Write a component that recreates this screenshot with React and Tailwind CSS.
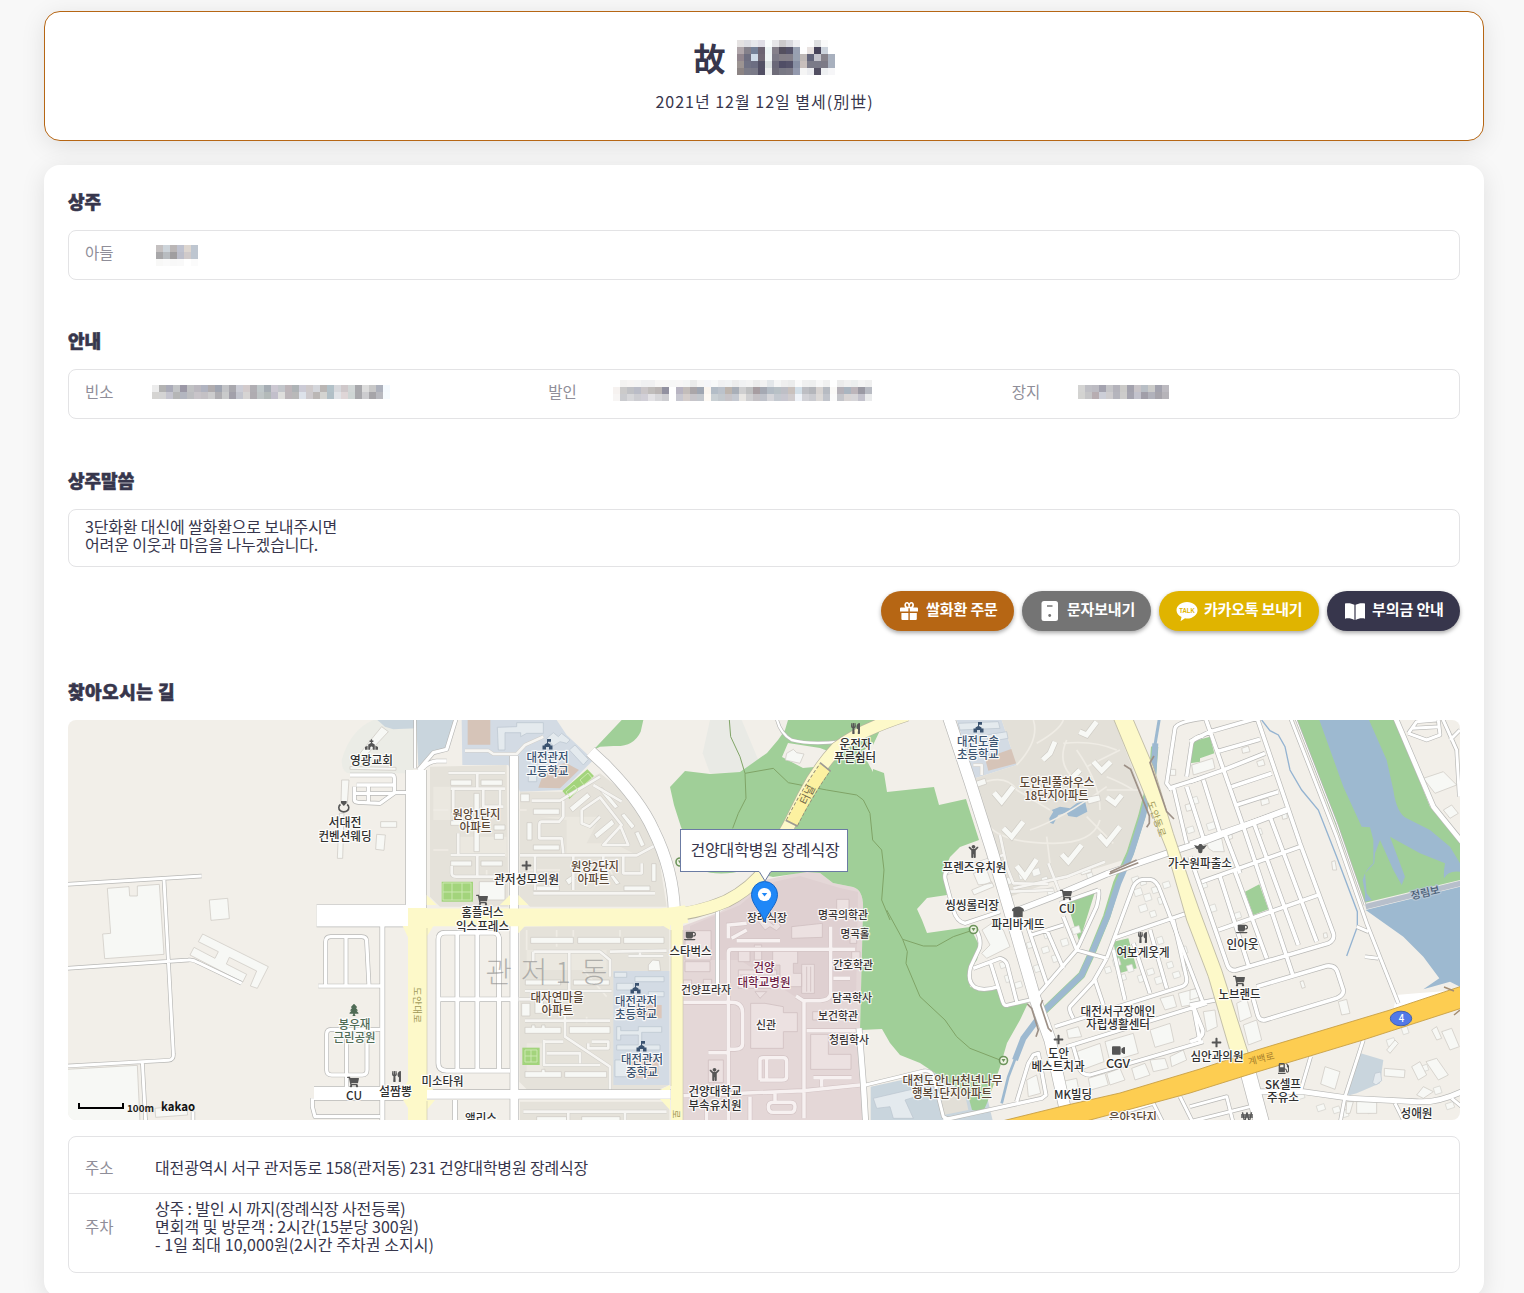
import React from "react";
import {
  FaChild,
  FaChurch,
  FaCoffee,
  FaGasPump,
  FaPlus,
  FaShoppingCart,
  FaTree,
  FaUtensils,
  FaBreadSlice,
  FaVideo,
  FaWonSign,
} from "react-icons/fa";

/* ---------- pixelated personal data ---------- */

const NAME = [
  "e5e2e2 dddde2 e6e8ec dfdee6 fafdfd e6e6e8 cccacc d8d8de eeeef2 ffffff fefefe dedfe0 fafafa ffffff",
  "b0a6aa 84808a 748198 6c6472 edf5f5 85808a 54505f 55536a 98a0b2 ffffff e8e2e0 48445a ccd3dc ffffff",
  "92868e 6e6e80 cedbe8 706874 f0f6f6 7c7a86 848088 84808a 98a0b0 beb8b6 62647a c4c4cc 86828a a8b0be",
  "9c9492 707284 6c6e82 525064 dce2e2 6a6878 504e66 55536a 8890a4 c8bfbc 7a7a88 7a7a88 7c7a86 a8b0be",
  "8c8484 7c7c88 7a7a88 524f64 eef0f0 6e6c78 787884 7c7a86 949aae f5f5f5 ecedf0 524f62 eef0f2 f6f6f8",
];
const SON = [
  "c5c1c1 cdd4da bab6b6 bfc2cf ddd6d0 bec6d0",
  "a8a7a9 b8bcc0 a09ea0 bcbeca d0caca bec6d0",
  "f8f8f7 fafafa f8f8f8 f9f9f9 ffffff fbfbfb",
];
const ROOM = [
  "ececec b3b3b3 aaabb8 c2c4c6 9b98a6 c0c1c3 bbb8bf b0b3c0 b0acae a0a5b1 c2c3c6 a9a8ae cccdd6 d3cbcc b0aeb3 c0c8ca a6adb4 ccc8d2 c3c6cb bdb5b9 aeb3b6 cccbd6 cfcacb d4d6db bab6b4 b2c1c8 d7d8dc cfc8ca d1d6d6 a8a8ac dcdcdc c8c8c8 adb1bc f5fafe",
  "d5d4d2 d4d4d4 c5c5cf b5b6b6 b3b6c0 bdbec1 c8c4c9 c4c1c5 cccccd afaeb2 c9cacb a2a0aa c3c5ce d6d4d3 afacb1 bfc5c6 b3bab9 c2bfcb dededc bcb6ba b9b9b9 dde2ea cecacd bbb7b5 d4d4d1 b1bfc6 e1e3e7 dfd6d7 ced5d4 a8a8ac cccccf a6a5a9 b8b9bf f6fbfe",
];
const PROCESSION = [
  "ffffff f4f3f2 f7f5f4 f5f5f5 f0f1f2 f1f1f2 f8f7f6 f8f7f6 f7f7f7 f8f7f7 f5f6f6 ebecec f6f6f6 f5f6f9 f8fafa f1f2f3 f2f4f5 ededed f1f2f3 f4f4f4 ececec f2f2f2 e3e7ea f5f6f6 efefef ebecec fafafa f0f0f0 eeefef f8f8f8 f1f1f1 ffffff ececec f1f1f1 ecefef f4f4f4 f0f0f0",
  "f6f2f0 cbcaca c0c1c5 babcc7 cac6c8 c0bdbb bab5b4 9291a0 ffffff b8b4c2 c3bdba aaa6a9 9fa6b2 faf5ef b3bdc7 bbc2cb bdb5ae a9afb8 cfcfd0 bebfc0 a79da1 a5a9b3 b3bcc5 b8c1c6 bebfc6 c9c1bd d3dfe8 bdbec3 b4b6bb d7d3d1 b7bbc2 faf9f7 b5b1b8 aab5c0 bcb5ba 9a99a3 b8bbc3",
  "f7f5f4 cacbcf d7d7da cdcdd2 d1cfd7 e3e2e5 d7d7da cdcdd1 ffffff c7c7d0 d4cdcb c7c5ca c3c7cd fdf9f4 c9d0d4 c3c9ce c7c4c8 c5c9d1 e8e6e3 cfcfd1 c4c1c5 bfc2ca d6d6da c4c9d0 c8c7d0 d0ccce eff3f9 d2d2d7 cacbd0 dcd9d7 c1c4cb fbfbfb c4c5ca d8d4d4 d6d5d8 c3c2cc eaebec",
];
const BURIAL = [
  "d4d4d3 bfbfc5 bcbbc2 a4a3af c5c5c8 b4b3bb cbcac8 a3a2ad c8c4c8 b8bec5 cbcbc9 a3a3ae bcbac0",
  "d3d3d1 c5c5c7 b7adb1 ccced7 ceccce b5b5bd cdcccb a5a4af c2c2cc a19fa9 b1b2bb a6a4ab b6b4b9",
];

function Mosaic({ rows }) {
  return (
    <div className="flex flex-col" aria-hidden="true">
      {rows.map((row, i) => (
        <div key={i} className="flex">
          {row.split(" ").map((c, j) => (
            <span key={j} className="block h-[7px] w-[7px]" style={{ backgroundColor: "#" + c }} />
          ))}
        </div>
      ))}
    </div>
  );
}

/* ---------- map data: tiles are drawn at three units per pixel ---------- */

const TILES = {
  a: [60, 710],
  b: [400, 710],
  c: [400, 910],
  d: [660, 710],
  e: [660, 910],
  f: [920, 710],
  g: [920, 910],
  h: [1190, 710],
};

const AREAS = [
  ["a", "#ebece6", "M845 150Q870 60 940 30H1060V190H870Q845 190 845 150Z"],
  ["a", "#c9d5dd", "M952 30H1060V55L1000 58 975 50Z"],
  ["b", "#c9d5dd", "M48 30H165L135 118 100 125 55 168ZM0 30H42V55H0Z"],
  ["b", "#d3dbe4", "M185 30H470L500 75 580 150 490 240 360 245 325 165H187Z"],
  ["b", "#d6c4b8", "M203 30H271V104H203ZM440 178L497 158 537 180 480 235 415 233 425 205Z"],
  ["b", "#e5e2da", "M90 170L320 165 325 590H120L90 560Z"],
  ["b", "#ebe8e0", "M100 230H150V330H100ZM170 380H320V440H170Z"],
  ["b", "#e5e2da", "M360 245H490L600 190 690 260 770 400 800 590H390L358 560Z"],
  ["b", "#ebe8e0", "M420 320H600L560 400H640L700 430H500V330Z"],
  ["b", "#a0cf98", "M730 30L722 65Q700 112 640 108L600 110 580 120 665 30Z"],
  ["b", "#a3d47c", "M125 515H219V575H125ZM487 243L562 178 582 198 508 267Z"],
  ["c", "#e5e2da", "M360 50L800 42 808 60V525L780 538H380L358 515ZM360 575H808V640H360Z"],
  ["c", "#ebe8e0", "M380 120H620V180H380ZM380 400H430V500H380Z"],
  ["c", "#d3dbe4", "M640 183H808V525H640Z"],
  ["c", "#dcc6ba", "M700 285H785V325H700ZM690 450L775 440V505H690Z"],
  ["c", "#a3d47c", "M367 413H419V465H367Z"],
  ["d", "#e9eae5", "M128 130L150 30H245L295 150 240 187 150 190Z"],
  ["e", "#c9d5dd", "M632 530L840 485 980 555 1000 640H632Z"],
  ["f", "#d3dbe4", "M110 30H245L290 165 165 205Z"],
  ["f", "#d6c4b8", "M195 145L280 115 290 160 205 182Z"],
  ["f", "#e3e0d8", "M245 30H582L670 260 655 330 610 450 400 515 270 560 235 440 175 240 165 205 290 165Z"],
  ["f", "#a0cf98", "M440 575L525 545 478 695ZM810 100L840 90V155L810 160Z"],
  ["g", "#a0cf98", "M580 95L625 85 650 175 598 190Z"],
  ["g", "#e2dfd7", "M60 530L130 530 145 600 70 615Z"],
  ["h", "#a0cf98", "M5 95L60 80 73 130 0 155ZM165 545L208 523 235 598 190 615Z"],
  ["h", "#a0cf98", "M318 30H615L720 290 810 400V510L525 578Z"],
  ["h", "#9db9d0", "M388 30H537L590 150 610 240Q620 310 650 325L720 360 780 410 810 460V485Q775 480 762 505 760 490 765 460 740 450 690 430L600 380 645 500 635 525 610 480 570 390 555 430 553 460 525 490 530 550 545 570 525 575 525 550 518 510Q525 480 550 460L550 390 540 352 515 350 460 230Z"],
  ["h", "#9db9d0", "M527 600L810 530V830L780 815 700 838 748 805 700 740 640 680Z"],
  ["h", "#c9d5dd", "M512 1030L580 1050 570 1120 500 1150 470 1158Z"],
  ["h", "#fff", "M612 895L618 855 680 850 810 840Z"],
];

const FOREST =
  "M670 787 685 771 710 774 740 772 767 753 778 740 785 730 788 720H885L873 745V769L884 773 887 792 934 787 939 805 966 799 979 840 960 847 950 857 943 873 947 895 927 898 917 909 922 920 927 933 948 930 970 927 980 947 977 960 969 970 970 987 987 990 1000 990 1003 1005 1028 1003 1020 1020 1007 1043 1000 1067 987 1103 983 1112 972 1110 968 1095 920 1063 900 1055 890 1043 882 1029 860 1030 863 910Q864 890 853 887L833 883 820 873 807 872 773 877 745 870Q720 877 700 870L681 827 674 805Z";

const BUILDINGS = [
  ["a", "M142 535L207 530 209 558H232V528L298 523 312 733 134 746 128 672 152 670ZM448 570L503 565 508 626 453 631ZM428 672L625 770 592 835 571 828 590 783 508 742 499 762 560 793 548 817 390 735 402 712 465 745 475 725 415 695ZM20 1078L232 1066 240 1235H20ZM845 210H867L862 280H843ZM838 310H852L848 445H832ZM962 335H1010V352H962ZM950 373L976 375 972 421 947 418ZM870 170L1008 172V181L870 178ZM965 50L985 65 915 140 900 130ZM285 1195L380 1185 383 1215 287 1222Z"],
  ["b", "M152 210H215V226H152ZM243 210H307V226H243ZM222 250H238V425H222ZM152 332H215V346H152ZM282 345H315V360H282ZM283 370H310V388H283ZM152 453H215V468H152ZM243 453H307V468H243ZM362 252H388V275H362ZM400 297H478V313H400ZM381 338H396V390H381ZM400 405H478V420H400ZM508 293L562 248 572 260 518 306ZM582 373L636 328 644 342 590 386ZM595 237L607 232 655 290 645 296ZM663 315L673 310 705 348 695 357ZM704 368L716 364 735 405 723 411ZM755 461H768V514H755ZM672 528H750V542H672ZM400 528H478V542H400ZM238 515H315V570H238ZM496 510L515 497 530 505 506 525ZM630 497L640 495 660 520 648 524Z"],
  ["c", "M392 82H520V100H392ZM533 82H662V100H533ZM671 82H792V100H671ZM376 210H482V225H376ZM520 210H628V225H520ZM365 280H390V318H365ZM405 270H430V310H405ZM375 352H395V345H405V352H425V345H435V352H483V370H375ZM508 350H630V370H508ZM375 485H425V478H435V485H484V502H375ZM494 485H620V502H494ZM745 165L758 150 778 152 782 182H745ZM410 620H500V640H410ZM545 620H660V640H545Z"],
  ["d", "M380 130L400 118 410 128 432 132 420 160 376 150Z"],
  ["f", "M165 215L195 205 200 222 170 232ZM155 540L215 515 222 530 162 555ZM160 490L200 478 215 520 175 525ZM478 480L510 468 515 485 485 495ZM500 262L538 255 542 272 505 282ZM750 178H767V196H750ZM795 285L812 280 816 300 800 304Z"],
  ["g", "M186 60L215 40 250 60 270 110 200 145 185 130 210 105ZM470 425L540 400 552 455 490 478ZM555 395L640 370 655 430 570 455ZM690 360L750 340 762 395 705 412ZM425 515L470 505 480 560 430 570ZM505 505L555 490 565 525 512 540ZM560 490L600 475 615 510 570 525ZM635 475L675 460 690 495 645 510ZM690 450L735 445 745 475 700 485ZM750 440L790 420 800 450 755 470ZM440 360L475 350 485 380 445 385ZM720 265L760 255 770 290 735 300ZM775 250L830 235 840 280 785 290ZM320 510L350 495 362 550 325 560Z"],
  ["h", "M5 165L68 145 75 175 10 195ZM50 395L95 385 103 425 70 425 55 415ZM160 945L200 930 215 990 175 1005ZM140 880L170 865 185 920 150 935ZM445 875L470 868 480 910 455 915ZM405 1070L450 1085 435 1138 392 1122ZM583 1075L645 1080 643 1103 583 1098ZM590 1020L615 990 625 1000 600 1030ZM665 1070L690 1055 710 1095 685 1110ZM708 1055L740 1045 775 1095 745 1110ZM755 965L785 955 808 1010 780 1020ZM680 1155L700 1130 730 1145 700 1165ZM700 205L760 185 800 225 735 250ZM760 300L785 285 805 310 780 325ZM470 1175H490L480 1210H468ZM500 1175H560V1210H500ZM725 960L740 950 755 985 740 990ZM155 115L175 108 180 125 158 130ZM200 155L220 148 225 165 205 170ZM212 270L235 265 238 280 215 287ZM425 455L435 452 440 480 428 480ZM330 815L340 812 346 832 336 835ZM400 670L410 668 413 682 402 685ZM275 310L290 307 292 325 278 328ZM110 372L125 370 128 385 114 390ZM40 905L75 900 82 950 50 965ZM0 840L25 835 32 860 0 870Z"],
];

const PINK_BUILDINGS =
  "M395 50L487 40V82L395 85ZM272 280H315L370 290V308H412V365H370V415H272ZM235 180H350V235H235ZM338 122H413V160H400V190H425V230H360V165H338ZM235 122H270V155H235ZM283 105H305V150H283ZM425 163H463V250H425ZM452 373H505V433H573V478H452ZM145 450H190V518H145ZM75 62H153V150H75ZM75 155H150V185H75ZM530 -32H567V20H530ZM458 305H500V330H458ZM575 125H600V160H575ZM295 35L315 25 340 45 355 35 362 50 350 62 330 50 315 60ZM285 245H320L300 265ZM570 80H590V100H570ZM70 210H95V235H70ZM130 208H155V235H130ZM240 195H345M240 215H345M440 170V245M452 170V245";

const SCHOOL_BUILDINGS = [
  ["b", "M292 52L350 50V38H430V70H380L362 80V68H315V120H295ZM440 85L460 68 475 80 485 70 510 90 500 100 480 95 460 108ZM508 120L525 105 565 148 550 165ZM385 190H410V215H385Z"],
  ["c", "M643 187H680V202H643ZM705 200H792V215H705ZM650 220H700V240H650ZM745 245H792V260H745ZM650 350H662V362H715V350H785V367H725V405H780V420H650V405H715V375H662V390H650ZM645 450H690V500H645Z"],
  ["f", "M115 40L235 35 240 55 120 60ZM200 75L260 65 264 85 205 95Z"],
  ["e", "M640 565L790 530 800 550 735 570 760 625H700L690 590 650 595Z"],
  ["h", "M555 1090L572 1086 575 1112 558 1125 548 1118Z"],
];

/* pale drives inside the apartment blocks */
const DRIVES = [
  ["b", 8, "M145 189H315M152 236H315M232 189V236M160 236V310M250 236V290H310M300 236V290M175 370V435M152 435H315M232 435V500M155 468V490Q155 500 170 500H315M360 436H710L768 405M395 272H480L600 200M490 272V320L478 335H425Q418 335 418 345V385H485L490 430M405 436V540M400 550H765M545 300L600 262 665 345 610 405H685L660 345M545 300V340L570 350 600 320M670 440V490H725V460M580 225L665 275M195 122H265L280 132H350L375 105 430 80M520 440V540M610 440V480"],
  ["c", 8, "M400 125H600L630 150V200M400 125V155M508 125V240M375 243H635M630 125L800 122M720 122V138M685 138H790M300 268H400M375 332H630M495 300V380L630 470V540M432 390V465H600M432 395H490M440 430H540V460M565 400V415H625V395H575M370 605H800M505 605V640M675 605V640"],
  ["f", 8, "M240 375L260 470 280 520 385 522M280 535L440 500 555 455M385 460L420 550M160 165H185V195M80 490L250 435M265 545L400 540"],
];

const PATHS = [
  ["f", "M290 165Q360 90 340 30M350 100Q420 60 430 30M430 100Q520 90 590 120M180 220Q260 190 290 240M200 340Q240 400 400 400Q520 400 540 330M290 240L390 300M330 360Q420 330 560 230M560 200Q610 220 640 240M440 90Q400 180 500 230M500 320L580 400M380 380L390 460M470 120Q540 220 540 300M600 120L500 170M560 240H660"],
  ["b", "M100 300H145M100 420H145M260 480V500M350 300H380M620 460L640 500M380 480H480"],
  ["c", "M380 60V120M520 60V80M660 60V80M550 180L620 260M560 320V340M470 60V110"],
];

const HOSPITAL_DRIVES =
  "M205 630V128Q205 118 215 118H585M512 50V250Q512 270 480 272H430L408 258M432 275V625M440 362H590M70 277H215Q248 277 248 310V400Q248 418 225 418H205M145 428H200M300 510V450Q300 443 310 443H370Q380 443 380 455V500Q380 510 365 510H300M320 443V510M70 557L430 542 600 525M345 550V577M325 590Q325 577 340 577H392Q405 577 405 590 405 607 392 607H340Q325 607 325 590M485 530V505M460 503H575M520 205H570M230 92H360M205 85V45L260 40M215 85L260 60M140 590V640M270 560V640";

const ROADS = [
  ["a", 9, "M20 523L425 498M312 510L325 750 340 1030Q342 1050 325 1051L20 1068M20 775L385 750Q400 748 415 758L545 820M247 1056L257 1235M399 1205V1235"],
  ["a", 10, "M797 828V695Q797 680 812 680H905Q920 680 920 695L927 828M858 680V828M775 828H965M962 958H815Q800 958 800 972V1080Q800 1095 815 1095H907Q921 1095 921 1080V958M860 965V1135M757 1165V1190L765 1220H960M870 195H995Q1003 195 1003 205V248H1040M890 225H1000M883 230V268Q883 277 895 277L960 280 1005 248M885 250H1000M925 225V275"],
  ["a", 13, "M967 640V1240"],
  ["a", 65, "M770 617H1060"],
  ["a", 40, "M762 1150H1060"],
  ["b", 6, "M45 20V175"],
  ["b", 10, "M170 20L140 118 100 128 55 180M140 153H110Q85 155 65 178"],
  ["b", 60, "M48 180V620"],
  ["b", 25, "M342 138V620"],
  ["b", 34, "M572 125L610 160Q720 270 760 360 820 480 823 605"],
  ["c", 24, "M343 0V650"],
  ["c", 26, "M-60 553H812"],
  ["c", 12, "M115 460V88Q115 68 135 68H280Q297 68 297 88V480M115 460Q115 482 140 482H330M172 68V480M232 68V480M110 268H355M165 570V640M297 80V480"],
  ["d", 7, "M350 25Q360 70 395 90 450 105 540 95"],
  ["e", 10, "M172 0V235"],
  ["e", 16, "M597 355L610 520 617 640"],
  ["e", 9, "M617 525L790 483Q815 480 820 500L850 620 870 630"],
  ["f", 34, "M85 20L150 215 215 420 268 600 345 865 390 990 435 1195"],
  ["f", 17, "M270 610L400 560 560 492 740 430 850 395 1100 300"],
  ["f", 10, "M85 480Q70 490 76 510L100 600Q110 635 135 640L240 605M535 540Q540 550 530 590L470 720 345 865M535 540L420 580M560 745L640 530Q650 510 670 508H690Q710 510 720 540L850 880M755 240L740 220 765 55Q770 35 850 25M745 235L840 205M760 230L800 400M800 200L815 100Q820 80 850 78"],
  ["g", 10, "M470 120L560 145M560 145L520 215 450 290Q445 300 460 325M580 85L800 10M580 120L615 270M640 100L690 250M690 60L740 235M760 30L800 205Q802 225 785 230L405 350M525 210L550 285M440 410L860 280M460 410L480 480Q490 495 510 495L850 395M160 175L240 145Q258 150 262 165L290 275M212 160L248 275Q252 290 265 285L330 270M170 62Q185 90 178 115L152 170Q140 215 165 232 190 245 235 230M335 75L430 45M320 40L380 220M380 60L430 175M430 20L470 120M70 630L160 610 365 565 378 555 355 430 340 435 325 460 290 575M820 290L840 395"],
  ["h", 11, "M200 20L330 400 430 670Q435 690 415 700L140 780Q120 785 112 765L0 440M45 20L160 350 290 740 310 800M-10 230L40 385M40 210L90 370M190 335L325 705M240 320L380 695M90 500L175 765M135 485L230 745M100 360L150 490M0 95L60 65 200 25M80 125L210 88M0 215L100 180 225 130M125 230L245 190M140 285L265 245M0 400L290 300M35 515L330 410M85 660L385 555M200 830L410 768Q435 765 442 785L460 840Q462 855 440 865L225 930Q208 932 203 915L185 850M10 890L38 960Q42 985 0 995M0 885L75 870"],
  ["h", 9, "M300 20L440 380 530 640 625 880M500 650L535 665M525 740L565 745"],
  ["h", 3, "M315 20L440 340 525 585"],
  ["h", 14, "M615 20L730 290 815 395"],
  ["h", 9, "M755 20L800 120 808 260M655 70L710 90 750 75 745 30M655 70L680 35 740 30M665 55L750 50M780 90L810 60"],
  ["h", 45, "M175 1090L215 1240"],
  ["h", 15, "M200 1145H340L480 1165 680 1175Q740 1180 815 1145"],
  ["h", 9, "M362 1040L340 1115 330 1150M520 990L465 1160 450 1240M0 1190L110 1160 130 1240M0 1235L180 1190M615 1180L645 1240M785 1165L815 1190"],
  ["g", 9, "M600 610L700 580 730 640M780 560L820 640"],
];

const VSHAPES =
  "M222 248L245 275 280 230M250 355L275 380 310 335M290 468L315 500 350 448M425 433L445 455 485 405M537 375L560 400 600 350M478 65L500 75 530 35M405 95L390 130 368 150M520 155L545 182 572 155M560 262L585 280 605 255M455 205L480 180";

const TRAILS = [
  ["d", "M208 30L212 80 240 140 255 190 258 265 235 310 218 355M255 190L340 175 385 218 500 240 590 255 610 270 630 310 638 390 665 420 672 480 665 570 690 630"],
  ["e", "M680 0L728 88 742 125 738 160 780 260 855 330 890 380 930 415 1020 450M728 88L790 108 830 108 880 80 940 60"],
];

/* small houses lining the streets on the east side */
const HOUSES = [
  [1010, 880], [1022, 876], [1035, 872], [1045, 880], [1050, 891], [1092, 880], [1090, 876], [1135, 880],
  [1137, 892], [1143, 882], [1147, 897], [1155, 890], [1161, 900], [1166, 885], [1142, 908], [1153, 914],
  [1020, 955], [1030, 945], [1037, 968], [1045, 950], [1055, 958], [1047, 935], [1064, 942], [1003, 965],
  [1008, 978], [1018, 985], [1075, 930], [1108, 970], [1116, 962], [1121, 978], [1130, 968], [1150, 972],
  [1158, 980], [1170, 965], [1183, 950], [1185, 968], [1160, 940], [1176, 975], [1141, 978], [1204, 885],
  [1212, 908], [1236, 916], [1195, 800], [1190, 830], [1210, 826], [1259, 832], [1300, 1095], [1320, 1108],
  [1345, 1113], [1336, 1110], [1390, 1042], [1425, 1068], [1437, 1090], [1449, 1106], [1405, 1030], [1370, 1110],
];

/* text, centre x, centre y, width, colour key */
const LABELS = [
  ["영광교회", 371.5, 759.5, 43],
  ["서대전", 345, 822, 33],
  ["컨벤션웨딩", 345, 835.5, 53],
  ["원앙1단지", 476.5, 814, 48, "b"],
  ["아파트", 475.5, 827, 32, "b"],
  ["대전관저", 547.5, 757, 42, "n"],
  ["고등학교", 547.5, 770.5, 42, "n"],
  ["관저성모의원", 526.5, 878.5, 65],
  ["원앙2단지", 595, 865.5, 48, "b"],
  ["아파트", 593.5, 878.5, 32, "b"],
  ["홈플러스", 482.5, 912, 42],
  ["익스프레스", 482.5, 925.5, 53],
  ["대자연마을", 557, 997, 53, "b"],
  ["아파트", 557.5, 1010, 32, "b"],
  ["대전관저", 636, 1001, 42, "n"],
  ["초등학교", 636, 1014, 42, "n"],
  ["대전관저", 642, 1059, 42, "n"],
  ["중학교", 642, 1072, 32, "n"],
  ["미소타워", 442.5, 1080.5, 42],
  ["앨리스", 481, 1118, 32],
  ["봉우재", 354.5, 1024, 32, "g"],
  ["근린공원", 354.5, 1037, 42, "g"],
  ["CU", 354, 1095, 16],
  ["설짬뽕", 395.5, 1091, 33],
  ["스타벅스", 690.5, 951, 42],
  ["건양프라자", 706, 989.5, 50, "s"],
  ["건양", 764, 967, 21, "m"],
  ["대학교병원", 764, 981.5, 53, "m"],
  ["신관", 766, 1024, 20, "s"],
  ["장례식장", 767, 917, 40, "s"],
  ["명곡의학관", 843, 914, 50, "s"],
  ["명곡홀", 855, 933, 29, "s"],
  ["간호학관", 853, 964, 40, "s"],
  ["담곡학사", 852, 997, 40, "s"],
  ["보건학관", 838, 1015, 40, "s"],
  ["청림학사", 849, 1039, 40, "s"],
  ["건양대학교", 715, 1090.5, 53],
  ["부속유치원", 715, 1104.5, 53],
  ["운전자", 855.5, 743.5, 32],
  ["푸른쉼터", 855, 757, 42],
  ["대전도솔", 978, 740.5, 42, "n"],
  ["초등학교", 978, 753.5, 42, "n"],
  ["도안린풀하우스", 1057, 781.5, 75, "b"],
  ["18단지아파트", 1056.5, 794.5, 64, "b"],
  ["프렌즈유치원", 974.5, 866.5, 64],
  ["씽씽롤러장", 972, 904.5, 54],
  ["CU", 1067, 907.5, 16],
  ["파리바게뜨", 1018, 923.5, 53],
  ["가수원파출소", 1200, 862.5, 64],
  ["인아웃", 1242.5, 943.5, 32],
  ["여보게웃게", 1143, 951.5, 53],
  ["노브랜드", 1239.5, 993.5, 42],
  ["대전서구장애인", 1118, 1010.5, 75],
  ["자립생활센터", 1118, 1023.5, 64],
  ["도안", 1058.5, 1052.5, 21],
  ["베스트치과", 1058, 1065.5, 53],
  ["CGV", 1118, 1063, 24],
  ["MK빌딩", 1073, 1093.5, 38],
  ["심안과의원", 1217, 1055.5, 53],
  ["SK셀프", 1283, 1084, 36],
  ["주유소", 1283, 1097, 32],
  ["성애원", 1416.5, 1112.5, 32],
  ["은아3단지", 1133, 1116.5, 48, "b"],
  ["대전도안LH천년나무", 952.5, 1080, 100, "b"],
  ["행복1단지아파트", 952, 1092.5, 80, "b"],
];
const INK = { k: "#2f2f2f", b: "#5a4735", n: "#3b5370", g: "#4f6b55", m: "#6e2345", s: "#3a3536" };

const POIS = [
  [FaChurch, 365, 738, 13],
  [FaPlus, 521, 860, 11],
  [FaPlus, 1053, 1034, 11],
  [FaPlus, 1211, 1037, 11],
  [FaShoppingCart, 476, 894, 12],
  [FaShoppingCart, 347, 1076, 12],
  [FaShoppingCart, 1060, 889, 12],
  [FaShoppingCart, 1233, 975, 12],
  [FaUtensils, 391, 1071, 11],
  [FaUtensils, 850, 723, 11],
  [FaUtensils, 1137, 932, 11],
  [FaCoffee, 684, 930, 12],
  [FaCoffee, 1236, 923, 12],
  [FaChild, 708, 1068, 13],
  [FaChild, 967, 845, 13],
  [FaBreadSlice, 1012, 906, 12],
  [FaVideo, 1112, 1044, 13],
  [FaGasPump, 1278, 1063, 11],
  [FaWonSign, 1241, 1111, 12],
];

function Tile({ id, children, ...rest }) {
  const [x, y] = TILES[id];
  return (
    <g transform={`translate(${x} ${y}) scale(0.33333)`} {...rest}>
      {children}
    </g>
  );
}

function Label({ text, x, y, w, color = "#2f2f2f", size = 12, rotate = 0, halo = "#fff" }) {
  return (
    <text
      x={x}
      y={y + 0.7}
      dy="0.36em"
      textAnchor="middle"
      textLength={w}
      lengthAdjust="spacingAndGlyphs"
      fontSize={size}
      fontWeight="500"
      fill={color}
      stroke={halo}
      strokeWidth={halo === "none" ? 0 : 2.4}
      strokeOpacity="0.85"
      strokeLinejoin="round"
      paintOrder="stroke"
      transform={rotate ? `rotate(${rotate} ${x} ${y})` : undefined}
    >
      {text}
    </text>
  );
}

function School({ x, y }) {
  return (
    <path
      transform={`translate(${x} ${y})`}
      fill="#3b5370"
      d="M4.500 0h4v2.800H5.500V4L8 5.600V6.400h2V10.500H6.500V8H3.500v2.500H0V6.400H2V5.600L4.500 4z"
    />
  );
}

function MapView() {
  return (
    <svg viewBox="68 720 1392 400" className="block h-full w-full font-['Noto_Sans_CJK_KR',sans-serif]">
      <rect x="68" y="720" width="1392" height="400" fill="#f2efe9" />
      <path d="M683 926 720 912 740 900 765 880 807 871 820 873 833 883 853 887Q864 890 863 910L860 1030 865 1120H683Z" fill="#e4d7d7" />
      <path d="M690 926 740 905 765 884 800 876 840 888 858 892 856 1000 800 1000 740 960H690Z" fill="#dfd0d1" />
      {AREAS.map(([t, c, d], i) => (
        <Tile key={i} id={t}>
          <path d={d} fill={c} />
        </Tile>
      ))}
      <path d={FOREST} fill="#a0cf98" />
      <path d="M788 743 820 748 833 753 825 766 803 768 782 757ZM862 752 873 742V772Z" fill="#f2efe9" />

      <Tile id="f" fill="none" stroke="#9db9d0" strokeLinejoin="round">
        <path d="M719 20L704 110" strokeWidth="9" />
        <path d="M704 110L698 190 665 320 630 430 590 520 560 620 515 730 485 795 370 905" strokeWidth="22" stroke="#a0cf98" />
        <path d="M706 100L700 190 668 320 633 430 595 520 562 620 515 730 485 795 370 905 310 985 285 1050" strokeWidth="18" />
        <path d="M290 1035L265 1100 245 1180" strokeWidth="8" />
        <path d="M388 325L400 305 395 300 420 290 450 295 470 280 495 272 502 305 470 322 445 318 440 308 415 315 400 342 390 338Z" fill="#9db9d0" stroke="none" />
      </Tile>
      <Tile id="h" fill="none" stroke="#94b3d1" strokeWidth="4">
        <path d="M215 30L240 62 265 75 285 110 300 180 335 240 385 300 440 440 502 605V650L470 738" />
      </Tile>
      <Tile id="h" fill="none" stroke="#b7bfcb" strokeWidth="16">
        <path d="M527 590L812 520" />
      </Tile>

      {TRAILS.map(([t, d], i) => (
        <Tile key={i} id={t} fill="none" stroke="#7fa466" strokeWidth="3">
          <path d={d} />
        </Tile>
      ))}
      {PATHS.map(([t, d], i) => (
        <Tile key={i} id={t} fill="none" stroke="#efece5" strokeWidth="5">
          <path d={d} />
        </Tile>
      ))}
      {SCHOOL_BUILDINGS.map(([t, d], i) => (
        <Tile key={i} id={t} fill="#e4eaee" stroke="#b9c4ce" strokeWidth="2">
          <path d={d} />
        </Tile>
      ))}
      {HOUSES.map(([x, y], i) => (
        <rect
          key={i}
          x={x - 3}
          y={y - 3}
          width={6 + (i % 3)}
          height={6 + ((i + 1) % 2)}
          transform={`rotate(-18 ${x} ${y})`}
          fill="#f7f8f5"
          stroke="#d5d4cf"
          strokeWidth="0.7"
        />
      ))}
      {BUILDINGS.map(([t, d], i) => (
        <Tile key={i} id={t} fill="#f7f8f5" stroke="#d0cdc6" strokeWidth="2.4">
          <path d={d} />
        </Tile>
      ))}
      <Tile id="f" fill="none">
        <path d={VSHAPES} stroke="#d0cdc6" strokeWidth="19" />
        <path d={VSHAPES} stroke="#f8f9f6" strokeWidth="15" />
      </Tile>

      {DRIVES.map(([t, w, d], i) => (
        <Tile key={i} id={t} fill="none" strokeLinejoin="round">
          <path d={d} stroke="#d0cec9" strokeWidth={w + 3} />
          <path d={d} stroke="#f6f5f2" strokeWidth={w} />
        </Tile>
      ))}
      <Tile id="e" fill="#ece1e1" stroke="#cfbfc0" strokeWidth="2.4">
        <path d={PINK_BUILDINGS} />
        <path d={HOSPITAL_DRIVES} fill="none" stroke="#d3c4c5" strokeWidth="14" />
        <path d={HOSPITAL_DRIVES} fill="none" stroke="#f7f1f1" strokeWidth="10.5" />
      </Tile>

      {/* road casings below, road surfaces above */}
      {ROADS.map(([t, w, d], i) => (
        <Tile key={i} id={t} fill="none" stroke="#b8b8b6" strokeLinejoin="round">
          <path d={d} strokeWidth={w + 4} />
        </Tile>
      ))}
      {ROADS.map(([t, w, d], i) => (
        <Tile key={i} id={t} fill="none" stroke="#fff" strokeLinejoin="round">
          <path d={d} strokeWidth={w} />
        </Tile>
      ))}

      {/* avenues */}
      <Tile id="c" fill="#fdf9c9">
        <path d="M80 -15V-45L110 -15ZM330 -15L300 -15 330 -45ZM355 -15V-45L385 -15ZM80 48V80L100 48ZM355 48V70L375 48ZM80 540L80 515 100 540ZM80 570V600L105 570ZM810 60L780 42H810ZM810 525L780 540H810ZM810 600L780 567H810ZM28 48V90L8 48ZM28 540V505L8 540ZM28 568V600L8 568Z" />
      </Tile>
      <Tile id="d" fill="none" strokeLinejoin="round">
        <path d="M-30 622L0 622Q110 612 200 573 275 535 322 470 355 400 385 350L430 260Q470 180 530 115 600 60 740 15" stroke="#b8b4a0" strokeWidth="40" />
        <path d="M-756 622L0 622Q40 620 80 612" stroke="#fdf9c9" strokeWidth="53" />
        <path d="M-30 622Q110 612 200 573 275 535 322 470 355 400 385 350L430 260Q470 180 530 115 600 60 740 15" stroke="#fdf9c9" strokeWidth="36" />
        <path d="M396 338Q440 250 495 172" stroke="#8d8672" strokeWidth="40" strokeDasharray="10 6" />
        <path d="M396 338Q440 250 495 172" stroke="#fcf1a0" strokeWidth="35" />
        <path d="M377 331L413 349M480 158L512 184" stroke="#9d9a93" strokeWidth="5" />
      </Tile>
      <path d="M408 908V1120H427V908ZM671 908V1120H683V915Z" fill="#fdf9c9" />
      <path d="M427 928V1086M427 1101V1120M683 930V1120M671 930V1086" stroke="#c9c5ac" strokeWidth="0.6" />
      <Tile id="f">
        <path
          d="M578 20H636L700 170 760 370 810 520 838 600 905 780 985 1030 935 1040 865 800 800 630 740 420 660 220Z"
          fill="#fdf9c9"
          stroke="#b8b4a0"
          strokeWidth="2.5"
        />
        <path d="M612 165L632 178 688 318V340L680 352M702 138L690 158 740 305 762 327M568 492L655 458M570 486L650 450" fill="none" stroke="#9d9086" strokeWidth="5" />
        <path d="M322 882L335 895 355 960 348 980M368 870L362 885 385 955 395 965" fill="none" stroke="#9d9086" strokeWidth="5" />
      </Tile>
      <path
        d="M990 1124 1063 1106 1120 1093 1200 1069 1257 1050 1390 1010 1462 986V1008L1363 1040 1257 1072 1190 1093 1120 1112 1075 1124Z"
        fill="#fdcd51"
        stroke="#c79f45"
        strokeWidth="0.9"
      />
      <path d="M1444 987 1454 991M1454 1015 1460 1010" stroke="#a58d72" strokeWidth="1.5" />
      <ellipse cx="1401" cy="1018.5" rx="10.7" ry="7.3" fill="#5279e8" stroke="#3f5fae" />
      <Label text="4" x={1401.5} y={1018} w={5.5} color="#fff" size={10} halo="none" />

      {/* sports courts */}
      <path d="M443 883H471M443 892H471M443 900H471M443 883V900M452 883V900M462 883V900M471 883V900M525 1050H537V1062H525ZM531 1050V1062M525 1056H537M566 792 574 785 578 790 570 797ZM580 780 588 773 592 778 584 785Z" stroke="#cfeab4" strokeWidth="0.9" fill="none" />

      {[[973.5, 929.5], [1003.5, 1060.5], [680, 862]].map(([x, y]) => (
        <g key={x}>
          <circle cx={x} cy={y} r="4" fill="#eef3e4" stroke="#6d945c" strokeWidth="1.6" />
          <path d={`M${x - 2} ${y - 1.4}h4l-2 3.2z`} fill="#6d945c" />
        </g>
      ))}

      <g fill="#888" fillOpacity="0.6" fontSize="29" fontWeight="300">
        {[["관", 498.5], ["저", 534], ["1", 563], ["동", 594]].map(([t, x]) => (
          <text key={t} x={x} y="983" textAnchor="middle">
            {t}
          </text>
        ))}
      </g>

      <g fill="#a09858" fontSize="9.5" textAnchor="middle">
        <text transform="translate(413.5 1005) rotate(90)" textLength="36">도안대로</text>
        <text transform="translate(1153.5 820) rotate(70)" textLength="37">도안동로</text>
        <text transform="translate(673 1114) rotate(90)">로</text>
        <text transform="translate(1262 1062) rotate(-14)" textLength="27" fill="#a87f2c">계백로</text>
        <text transform="translate(811 796.5) rotate(-64)" textLength="20" fill="#6f6848" fontSize="11">터널</text>
      </g>
      <Label text="정림보" x={1425} y={892} w={30} color="#4a5d74" size={10.5} rotate={-13} halo="#b7c7d6" />

      {POIS.map(([Icon, x, y, s], i) => (
        <Icon key={i} x={x} y={y} size={s} color="#555" />
      ))}
      <FaTree x={348} y={1004} size={12} color="#4f6b55" />
      <School x={542.5} y={739} />
      <School x={630.5} y={983} />
      <School x={636.5} y={1041} />
      <School x={973.5} y={722} />
      <g fill="none" stroke="#555" strokeWidth="1.6">
        <path d="M340.5 804.5a5 4.2 0 1 0 6.6 0" />
        <path d="M343.8 806 341 803v-2h5.600v2z" fill="#555" stroke="none" />
      </g>
      <path d="M1194 845l4 1 1.500-2h2l1.500 2 4-1-3 4-1.500.5v1.500a2.200 2.200 0 0 1-4.400 0v-1.500l-1.500-.5z" fill="#555" />

      {LABELS.map(([t, x, y, w, c], i) => (
        <Label key={i} text={t} x={x} y={y} w={w} color={INK[c || "k"]} size={c === "s" ? 11.3 : 12} />
      ))}

      {/* scale bar */}
      <path d="M79 1103V1108H123V1103" fill="none" stroke="#000" strokeWidth="2" />
      <text x="127" y="1112" fontSize="9.5" fontWeight="700" textLength="27" lengthAdjust="spacingAndGlyphs" fill="#222">
        100m
      </text>
      <text x="161" y="1111" fontSize="12" fontWeight="700" textLength="34" lengthAdjust="spacingAndGlyphs" fill="#111">
        kakao
      </text>

      {/* destination pin */}
      <path d="M764.500 922C762 912 751.500 905 751.500 894.500a13 13 0 0 1 26 0C777.500 905 767 912 764.500 922Z" fill="#1f87f7" stroke="#1466c9" />
      <circle cx="764.5" cy="894.500" r="6.600" fill="#fff" />
      <path d="M761.700 893h5.600l-2.800 3.400z" fill="#1f87f7" />
    </svg>
  );
}

/* ---------- button icons ---------- */

const GiftIcon = () => (
  <svg viewBox="0 0 24 24" className="h-6 w-6" fill="#fff">
    <path d="M4 8.500h4.300C6.500 6.500 7.500 3 10 3c1 0 1.700.6 2.200 1.400C12.700 3.600 13.400 3 14.400 3c2.500 0 3.500 3.500 1.700 5.500H20a1 1 0 0 1 1 1V12.600h-8.200V9.200h-1.400v3.400H3V9.500a1 1 0 0 1 1-1zM9.800 4.600c-1.200.4-1 2.600.2 3.200h1.500C11.400 6.300 10.900 4.400 9.800 4.600zm4.700 0c-1.100-.2-1.600 1.700-1.700 3.200h1.500c1.200-.6 1.400-2.800.2-3.200z" />
    <path d="M4.400 14h7v7h-6a1 1 0 0 1-1-1zM12.800 14h7v6a1 1 0 0 1-1 1h-6z" />
  </svg>
);
const PhoneIcon = () => (
  <svg viewBox="0 0 24 24" className="h-6 w-6">
    <rect x="3.500" y="2" width="16.500" height="20" rx="2.500" fill="#fff" />
    <path d="M9 7h5.500" stroke="#747474" strokeWidth="1.500" />
    <circle cx="11.700" cy="16.500" r="1.400" fill="#747474" />
  </svg>
);
const TalkIcon = () => (
  <svg viewBox="0 0 24 24" className="h-6 w-6">
    <path d="M12 3c6 0 10.500 3.700 10.500 8.200S18 19.500 12 19.500c-.7 0-1.400 0-2-.2L5.500 22.300l1-4.300C3.500 16.500 1.500 14 1.500 11.200 1.500 6.700 6 3 12 3z" fill="#fff" />
    <text x="12" y="13.600" textAnchor="middle" fontSize="6.800" fontWeight="700" textLength="15.500" lengthAdjust="spacingAndGlyphs" fill="#e0b400" fontFamily="Liberation Sans">
      TALK
    </text>
  </svg>
);
const BookIcon = () => (
  <svg viewBox="0 0 24 24" className="h-6 w-6" fill="#fff">
    <path d="M2 4.500C5 3.800 8.500 4 11.400 5.800V21C8.500 19.300 5 18.900 2 19.700zM22 4.500C19 3.800 15.500 4 12.600 5.800V21c2.900-1.700 6.400-2.100 9.400-1.300z" />
  </svg>
);

const BUTTONS = [
  [GiftIcon, "쌀화환 주문", "w-[133px] bg-[#b66614]", "tracking-[-0.1px]"],
  [PhoneIcon, "문자보내기", "w-[129px] bg-[#747474]", "tracking-[-0.2px]"],
  [TalkIcon, "카카오톡 보내기", "w-[160px] bg-[#e0b400]", "tracking-[-0.2px]"],
  [BookIcon, "부의금 안내", "w-[133px] bg-[#37364c]", "tracking-[-0.1px]"],
];

function Heading({ children, className = "" }) {
  return (
    <h2
      className={`mb-[17px] h-6 text-[18px] leading-6 font-black whitespace-nowrap [-webkit-text-stroke:0.6px_#37364c] ${className}`}
    >
      {children}
    </h2>
  );
}

const BOX = "rounded-lg border border-[#e3e3e5]";
const CARD = "rounded-2xl bg-white shadow-[0_5px_24px_rgba(0,0,0,0.1)]";

export default function App() {
  return (
    <div className="h-[1293px] w-full overflow-hidden bg-[#f8f8f8] pt-[11px] pr-10 pl-11 font-['Noto_Sans_CJK_KR',sans-serif] text-[#37364c]">
      <header className={`flex h-[130px] flex-col items-center border border-[#b66614] ${CARD}`}>
        <div className="mt-[24px] flex h-[42px] items-center gap-[11px]">
          <span className="text-[32px] leading-[42px] font-bold">故</span>
          <div className="pt-px">
            <Mosaic rows={NAME} />
          </div>
        </div>
        <p className="mt-[11px] pl-px text-[16px] leading-6 tracking-[1px] whitespace-nowrap">2021년 12월 12일 별세(別世)</p>
      </header>

      <main className={`mt-6 h-[1132px] p-6 ${CARD}`}>
        <Heading>상주</Heading>
        <div className={`flex h-[50px] pl-4 text-[15.500px] ${BOX}`}>
          <span className="w-[71px] pt-[9px] leading-6 text-[#8f8e99]">아들</span>
          <div className="pt-[14px]">
            <Mosaic rows={SON} />
          </div>
        </div>

        <Heading className="mt-12">안내</Heading>
        <div className={`grid h-[50px] grid-cols-3 text-[15.500px] ${BOX}`}>
          <div className="flex pl-4">
            <span className="w-[67px] pt-[9px] leading-6 text-[#8f8e99]">빈소</span>
            <div className="pt-[15px]">
              <Mosaic rows={ROOM} />
            </div>
          </div>
          <div className="flex pl-4">
            <span className="w-[65px] pt-[9px] leading-6 text-[#8f8e99]">발인</span>
            <div className="pt-[10px]">
              <Mosaic rows={PROCESSION} />
            </div>
          </div>
          <div className="flex pl-4">
            <span className="w-[66px] pt-[9px] leading-6 text-[#8f8e99]">장지</span>
            <div className="pt-[15px]">
              <Mosaic rows={BURIAL} />
            </div>
          </div>
        </div>

        <Heading className="mt-[49px]">상주말씀</Heading>
        <p className={`h-[58px] pt-[7px] pl-4 text-[16px] leading-[18px] tracking-[-0.150px] ${BOX}`}>
          3단화환 대신에 쌀화환으로 보내주시면
          <br />
          어려운 이웃과 마음을 나누겠습니다.
        </p>

        <div className="mt-6 flex justify-end gap-2">
          {BUTTONS.map(([Icon, text, cls, track]) => (
            <button
              key={text}
              type="button"
              className={`flex h-10 items-center gap-[5px] rounded-full pl-4 text-[15px] font-bold whitespace-nowrap text-white shadow-[0_2px_4px_rgba(0,0,0,0.35)] ${cls}`}
            >
              <Icon />
              <span className={`pb-[3px] ${track}`}>{text}</span>
            </button>
          ))}
        </div>

        <Heading className="mt-12 tracking-[0.500px]">찾아오시는 길</Heading>
        <div className="relative h-[400px] overflow-hidden rounded-lg">
          <MapView />
          <div className="absolute top-[109px] left-[612px] flex h-[43px] w-[168px] items-center justify-center border border-[#6b7ba3] bg-white pb-[4px] pl-[2px] text-[16px] tracking-[-0.150px] whitespace-nowrap">
            건양대학병원 장례식장
          </div>
          <svg viewBox="0 0 12 11" className="absolute top-[151px] left-[690.500px] h-[11px] w-3">
            <path d="M0 0H12L6 10z" fill="#fff" />
            <path d="M0.500 1L6 10 11.500 1" fill="none" stroke="#6b7ba3" />
          </svg>
        </div>

        <dl className={`mt-4 h-[137px] text-[15.500px] leading-[18px] ${BOX}`}>
          <div className="flex h-[57px] items-center border-b border-[#e3e3e5] pt-[3px] pl-4">
            <dt className="w-[70px] text-[#8f8e99]">주소</dt>
            <dd className="text-[16px] tracking-[-0.150px] whitespace-nowrap">대전광역시 서구 관저동로 158(관저동) 231 건양대학병원 장례식장</dd>
          </div>
          <div className="flex items-center pt-[5px] pl-4">
            <dt className="w-[70px] text-[#8f8e99]">주차</dt>
            <dd className="flex flex-col text-[16px] whitespace-nowrap">
              <span className="tracking-[-0.150px]">상주 : 발인 시 까지(장례식장 사전등록)</span>
              <span className="tracking-[0.030px]">면회객 및 방문객 : 2시간(15분당 300원)</span>
              <span className="tracking-[0.050px]">- 1일 최대 10,000원(2시간 주차권 소지시)</span>
            </dd>
          </div>
        </dl>
      </main>
    </div>
  );
}
